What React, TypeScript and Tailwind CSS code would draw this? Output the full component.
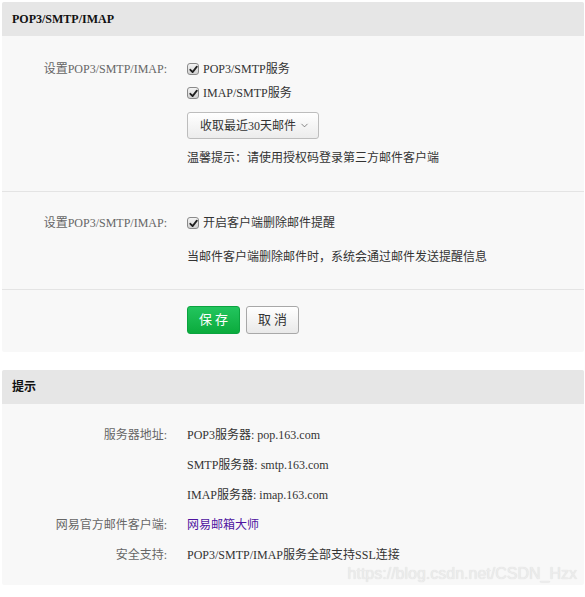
import { ChevronDown } from 'lucide-react';

const font = { fontFamily: '"Liberation Serif", "Noto Sans CJK SC", serif' };

function Check({ label }: { label: string }) {
  return (
    <label className="flex items-center h-6 text-[12px] text-[#333]">
      <span className="w-3 h-3 rounded-[3px] border border-[#8a8a8a] bg-gradient-to-b from-[#f4f4f4] to-[#d2d2d2] flex items-center justify-center">
        <svg viewBox="0 0 10 10" className="w-[9px] h-[9px]">
          <path d="M1.5 5.3 L4 7.9 L8.7 1.8" fill="none" stroke="#222" strokeWidth="2" strokeLinecap="round" strokeLinejoin="round" />
        </svg>
      </span>
      <span className="ml-1">{label}</span>
    </label>
  );
}

function Row({ label, children }: { label: string; children: React.ReactNode }) {
  return (
    <div className="flex">
      <div className="w-[165px] shrink-0 text-right text-[12px] text-[#666] leading-6">{label}</div>
      <div className="ml-5 flex flex-col">{children}</div>
    </div>
  );
}

function InfoRow({ label, children }: { label: string; children: React.ReactNode }) {
  return (
    <div className="flex h-[30px] items-center text-[12px]">
      <div className="w-[165px] shrink-0 text-right text-[#666]">{label}</div>
      <div className="ml-5 text-[#333]">{children}</div>
    </div>
  );
}

export default function App() {
  return (
    <div className="bg-white w-[585px] h-[597px] pt-[2px] pl-[2px] pr-[1px]" style={font}>
      <section className="rounded-[2px] overflow-hidden bg-[#f8f8f8]">
        <div className="h-[34px] bg-[#e6e6e6] flex items-center px-[10px] text-[12px] font-bold text-[#111]">
          POP3/SMTP/IMAP
        </div>
        <div className="pt-[21px] pb-[21px] border-b border-[#e4e4e4]">
          <Row label="设置POP3/SMTP/IMAP:">
            <Check label="POP3/SMTP服务" />
            <Check label="IMAP/SMTP服务" />
            <button className="mt-[7px] w-[132px] h-[27px] rounded-[3px] border border-[#bdbdbd] bg-gradient-to-b from-white to-[#ececec] flex items-center pl-3 pr-2 text-[12px] text-[#333]">
              <span>收取最近30天邮件</span>
              <ChevronDown size={11} strokeWidth={1.5} className="ml-auto text-[#555]" />
            </button>
            <div className="mt-[7px] leading-6 text-[12px] text-[#333]">温馨提示：请使用授权码登录第三方邮件客户端</div>
          </Row>
        </div>
        <div className="pt-[19px] pb-[20px] border-b border-[#e4e4e4]">
          <Row label="设置POP3/SMTP/IMAP:">
            <Check label="开启客户端删除邮件提醒" />
            <div className="mt-[10px] leading-6 text-[12px] text-[#333]">当邮件客户端删除邮件时，系统会通过邮件发送提醒信息</div>
          </Row>
        </div>
        <div className="pt-4 pb-[18px] flex">
          <div className="w-[165px] shrink-0" />
          <div className="ml-5 flex gap-[6px]">
            <button className="w-[53px] h-[28px] rounded-[3px] border border-[#0ba33f] bg-gradient-to-b from-[#22c55e] to-[#0aab3c] text-white text-[13px] tracking-[3px] pl-[3px]">
              保存
            </button>
            <button className="w-[53px] h-[28px] rounded-[3px] border border-[#a8a8a8] bg-gradient-to-b from-white to-[#e9e9e9] text-[#333] text-[13px] tracking-[3px] pl-[3px]">
              取消
            </button>
          </div>
        </div>
      </section>

      <section className="relative mt-[18px] rounded-[2px] overflow-hidden bg-[#f8f8f8]">
        <div className="h-[34px] bg-[#e6e6e6] flex items-center px-[10px] text-[12px] font-bold text-[#111]">
          提示
        </div>
        <div className="pt-4 pb-[15px]">
          <InfoRow label="服务器地址:">POP3服务器: pop.163.com</InfoRow>
          <InfoRow label="">SMTP服务器: smtp.163.com</InfoRow>
          <InfoRow label="">IMAP服务器: imap.163.com</InfoRow>
          <InfoRow label="网易官方邮件客户端:">
            <a className="text-[#4f14a0]">网易邮箱大师</a>
          </InfoRow>
          <InfoRow label="安全支持:">POP3/SMTP/IMAP服务全部支持SSL连接</InfoRow>
        </div>
        <div
          className="absolute right-[7px] bottom-[-1px] text-[16px] text-[#ececec] pointer-events-none"
          style={{ fontFamily: '"Liberation Sans", sans-serif', textShadow: '0 0 1px #d6d6d6' }}
        >
          https://blog.csdn.net/CSDN_Hzx
        </div>
      </section>
    </div>
  );
}
